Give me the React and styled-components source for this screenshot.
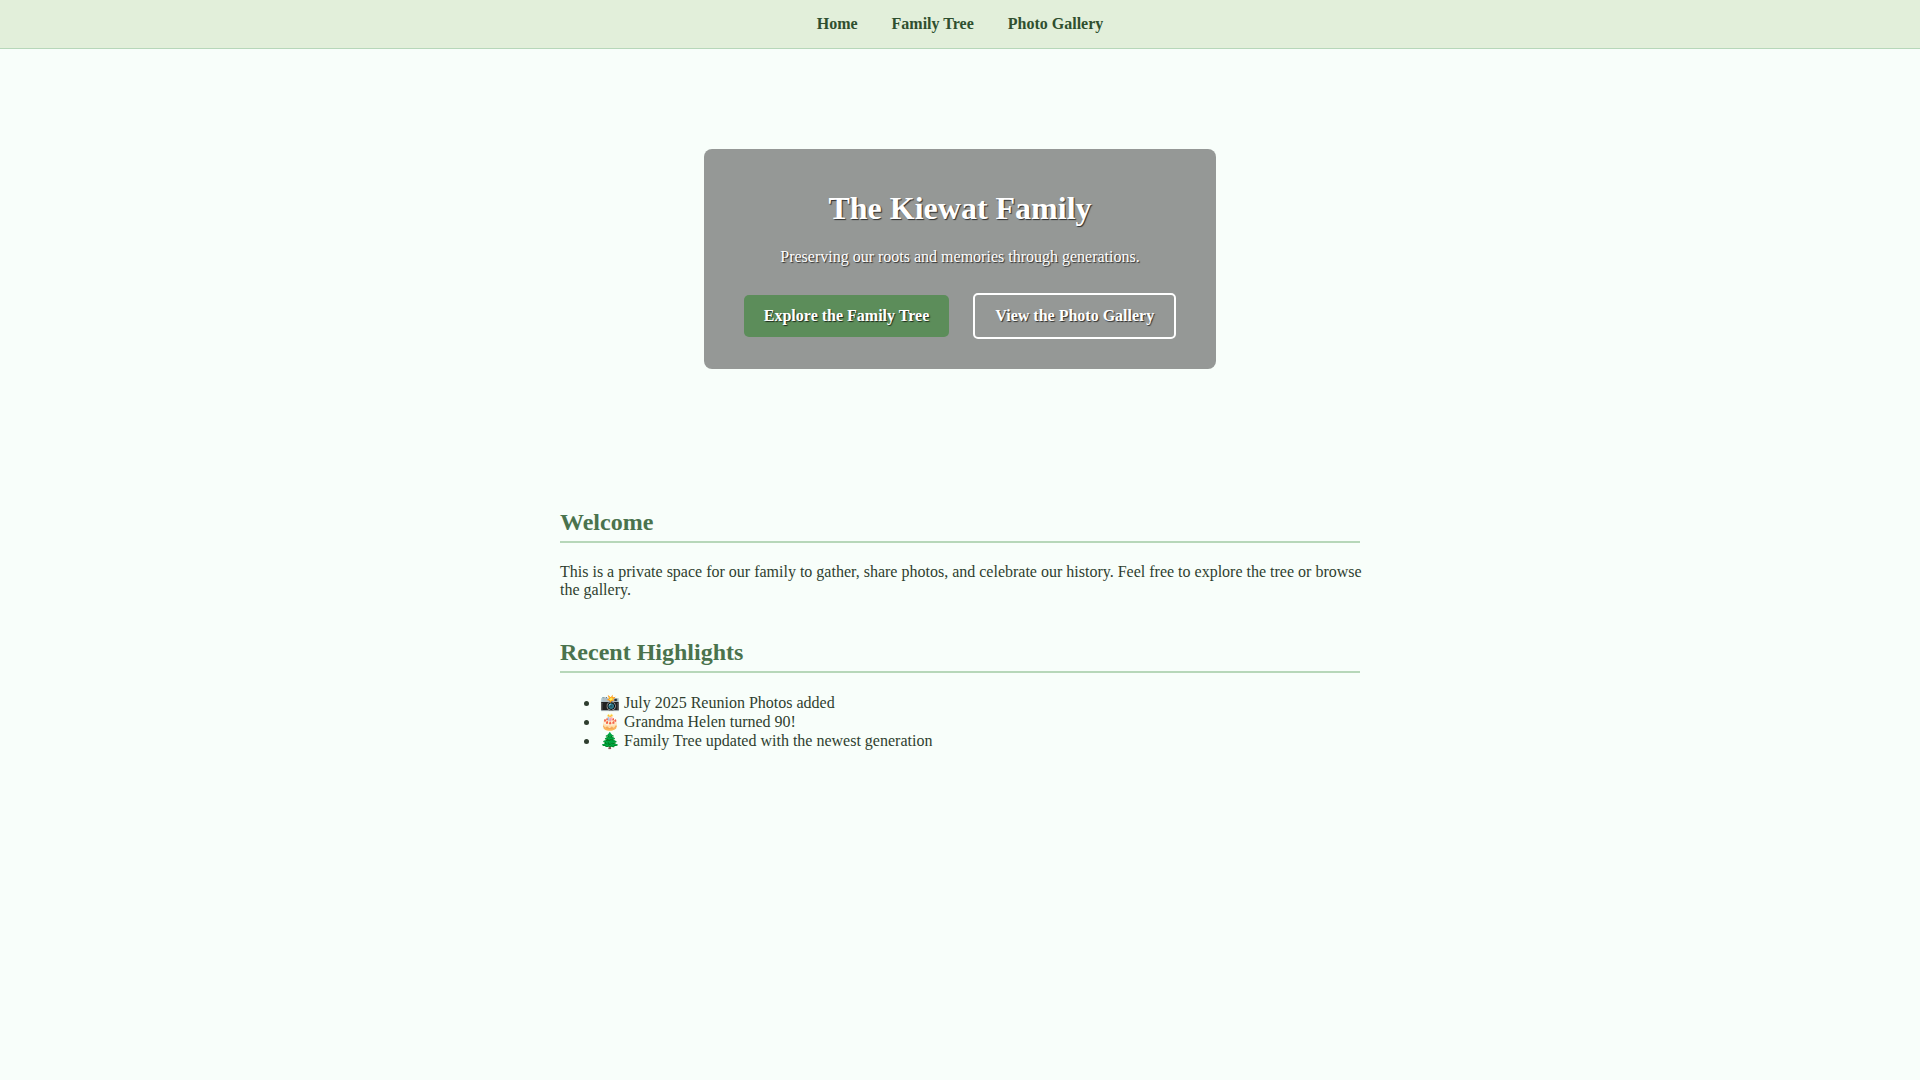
import React from 'react';
import styled, { createGlobalStyle } from 'styled-components';

const highlights = [
    '📸 July 2025 Reunion Photos added',
    '🎂 Grandma Helen turned 90!',
    '🌲 Family Tree updated with the newest generation',
];

const App = () => {
    return (
        <>
            <GlobalStyle />
            <Nav>
                <NavLink href="#home">Home</NavLink>
                <NavLink href="#tree">Family Tree</NavLink>
                <NavLink href="#gallery">Photo Gallery</NavLink>
            </Nav>
            <Hero>
                <HeroCard>
                    <HeroTitle>The Kiewat Family</HeroTitle>
                    <HeroText>Preserving our roots and memories through generations.</HeroText>
                    <HeroButtons>
                        <HeroLink href="#tree">Explore the Family Tree</HeroLink>
                        <HeroLink href="#gallery" $outline>View the Photo Gallery</HeroLink>
                    </HeroButtons>
                </HeroCard>
            </Hero>
            <Main>
                <Section>
                    <SectionTitle>Welcome</SectionTitle>
                    <Text>
                        This is a private space for our family to gather, share photos, and celebrate our history.
                        Feel free to explore the tree or browse the gallery.
                    </Text>
                </Section>
                <Section>
                    <SectionTitle>Recent Highlights</SectionTitle>
                    <List>
                        {highlights.map((item) => <li key={item}>{item}</li>)}
                    </List>
                </Section>
            </Main>
        </>
    )
}

const GlobalStyle = createGlobalStyle`
    body {
        margin: 0;
        font-family: "Liberation Serif", serif;
        font-size: 16px;
        color: #2f3e2f;
        background-color: #f8fefa;
    }
`

const Nav = styled.nav`
    display: flex;
    justify-content: center;
    gap: 34px;
    padding: 15px 0;
    background-color: #e2efda;
    border-bottom: 1px solid #b7d7b9;
`

const NavLink = styled.a`
    color: #2f4f2f;
    font-weight: bold;
    text-decoration: none;
`

const Hero = styled.header`
    display: flex;
    justify-content: center;
    padding: 100px 20px;
    color: white;
    text-align: center;
    text-shadow: 1px 1px 1px rgba(0, 0, 0, 0.7);
`

const HeroCard = styled.div`
    padding: 40px 40px 30px;
    border-radius: 8px;
    background-color: rgba(0, 0, 0, 0.4);
`

const HeroTitle = styled.h1`
    margin: 0 0 21px;
    font-size: 32px;
    line-height: 38px;
`

const HeroText = styled.p`
    margin: 0 0 27px;
    line-height: 18px;
`

const HeroButtons = styled.div`
    display: flex;
    flex-wrap: wrap;
    justify-content: center;
    align-items: center;
    gap: 24px;
`

const HeroLink = styled.a`
    padding: 12px 20px;
    border: ${(props) => (props.$outline ? '2px solid white' : 'none')};
    border-radius: 5px;
    background-color: ${(props) => (props.$outline ? 'transparent' : '#5c8d5a')};
    color: white;
    font-weight: bold;
    line-height: 18px;
    text-decoration: none;
`

const Main = styled.main`
    max-width: 800px;
    margin: 40px auto;
    padding: 0 20px;
`

const Section = styled.section`
    margin-bottom: 40px;
`

const SectionTitle = styled.h2`
    margin: 0 0 20px;
    padding-bottom: 5px;
    border-bottom: 2px solid #b7d7b9;
    color: #4a734d;
    font-size: 24px;
    line-height: 27px;
`

const Text = styled.p`
    margin: 0 -4px 0 0;
    line-height: 18px;
`

const List = styled.ul`
    margin: 0;
    padding-left: 40px;
`

export default App;
